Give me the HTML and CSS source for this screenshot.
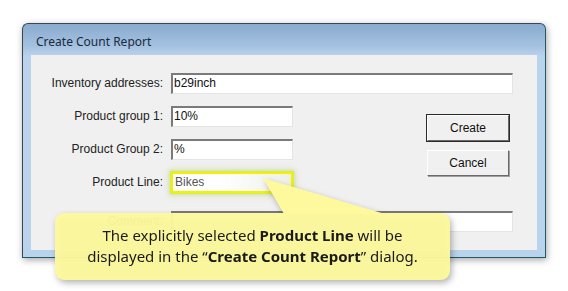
FILE: index.html
```html
<!DOCTYPE html>
<html lang="en">

    <head>
        <meta charset="UTF-8">
        <title>Create Count Report</title>
        <link rel="stylesheet" href="styles.css">
    </head>

    <body>
        <div class="page">
            <div class="window">
                <div class="titleBar">Create Count Report</div>
                <div class="client">
                    <div class="form">
                        <label class="lbl r1">Inventory addresses:</label>
                        <div class="field wide r1">b29inch</div>

                        <label class="lbl r2">Product group 1:</label>
                        <div class="field r2">10%</div>

                        <label class="lbl r3">Product Group 2:</label>
                        <div class="field r3">%</div>

                        <label class="lbl r4">Product Line:</label>
                        <div class="field marked r4">Bikes</div>

                        <label class="lbl r5">Comment:</label>
                        <div class="field wide r5"></div>

                        <div class="buttons">
                            <button class="btn default">Create</button>
                            <button class="btn">Cancel</button>
                        </div>
                    </div>
                </div>
            </div>

            <div class="callout">
                <svg class="tail" width="122" height="36" viewBox="0 0 122 36">
                    <polygon points="0,0 21,36 122,36" fill="#fdf99c" />
                </svg>
                <p>The explicitly selected <b>Product Line</b> will be<br>
                    displayed in the &ldquo;<b>Create Count Report</b>&rdquo; dialog.</p>
            </div>
        </div>
    </body>

</html>
```

FILE: styles.css
```css
* {
    box-sizing: border-box;
    padding: 0;
    margin: 0;
}

body {
    margin: 0;
    width: 568px;
    height: 291px;
    background-color: #fff;
    overflow: hidden;
    font-family: "Liberation Sans", Arial, sans-serif;
}

.page {
    position: relative;
    width: 568px;
    height: 291px;
    padding: 23px 0 0 22px;
}

.window {
    width: 524px;
    height: 235px;
    display: flex;
    flex-direction: column;
    border: 1px solid #3b4650;
    border-right-color: #1f5a66;
    border-bottom-color: #1f5a66;
    border-radius: 6px 6px 0 0;
    background: linear-gradient(#8aabcf 0px, #a4c1e0 22px, #bad3ec 32px, #bad3ec 100%);
    box-shadow: 1px 2px 7px rgba(0, 0, 0, 0.35);
}

.titleBar {
    height: 31px;
    padding: 11px 0 0 13px;
    font-family: "Noto Sans", "Open Sans", sans-serif;
    font-size: 12px;
    color: #1b2a3c;
    line-height: 14px;
}

.client {
    flex: 1;
    margin: 0 8px 7px 8px;
    background-color: #f0f0f0;
    padding-top: 18px;
}

.form {
    display: grid;
    grid-template-columns: 133px 122px 141px 82px;
    grid-template-rows: 21px 21px 21px 21px 21px;
    row-gap: 12px;
}

.r1 { grid-row: 1; }
.r2 { grid-row: 2; }
.r3 { grid-row: 3; }
.r4 { grid-row: 4; }
.r5 { grid-row: 5; margin-top: 6px; }

.lbl {
    grid-column: 1;
    text-align: right;
    padding-right: 1px;
    font-size: 12px;
    line-height: 21px;
    color: #222;
}

.field {
    grid-column: 2;
    margin-left: 7px;
    width: 122px;
    height: 21px;
    background-color: #fff;
    border-top: 2px solid #7a7a7a;
    border-left: 2px solid #7a7a7a;
    border-right: 1px solid #e4e4e4;
    border-bottom: 1px solid #e4e4e4;
    font-size: 12px;
    line-height: 17px;
    padding-left: 1px;
    color: #111;
}

.field.wide {
    grid-column: 2 / 5;
    width: 342px;
}

.field.marked {
    border: 2px solid #f4f000;
    background: linear-gradient(90deg, #fff 40%, #eef0e8 100%);
    box-shadow: 0 0 0 1px #d9ea4c, 0 0 5px 2px rgba(170, 210, 90, 0.55);
    padding-left: 2px;
    color: #555;
}

.buttons {
    grid-column: 4;
    grid-row: 2 / 5;
    display: flex;
    flex-direction: column;
    gap: 9px;
    padding-top: 9px;
}

.btn {
    width: 82px;
    height: 26px;
    background-color: #f0f0f0;
    border: 1px solid;
    border-color: #fff #6a6a6a #6a6a6a #fff;
    box-shadow: 1px 1px 0 #a0a0a0;
    font-family: "Liberation Sans", Arial, sans-serif;
    font-size: 12px;
    color: #111;
}

.btn.default {
    outline: 1px solid #2a2a2a;
}

.callout {
    position: absolute;
    left: 55px;
    top: 213px;
    width: 395px;
    height: 67px;
    border-radius: 9px;
    background-color: rgba(253, 249, 156, 0.96);
    filter: drop-shadow(2px 3px 3px rgba(0, 0, 0, 0.3));
    padding-top: 12px;
}

.tail {
    position: absolute;
    left: 208px;
    top: -35px;
}

.callout p {
    position: relative;
    text-align: center;
    font-family: "Noto Sans", "Open Sans", sans-serif;
    font-size: 15px;
    line-height: 21px;
    color: #1a1a1a;
}

.callout b {
    font-weight: 700;
}
```
